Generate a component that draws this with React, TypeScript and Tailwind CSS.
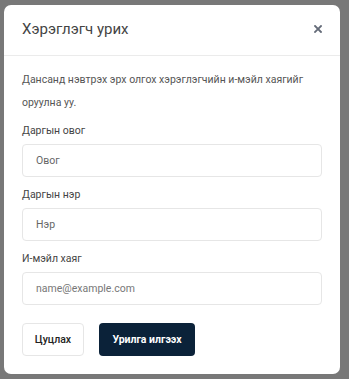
import React from "react";

export default function App() {
  return (
    <div className="w-[349px] h-[379px] bg-[#787878] pt-[5px] pl-[4px]" style={{ fontFamily: "Roboto, 'Noto Sans', sans-serif" }}>
      <div className="w-[336px] h-[369px] bg-white rounded-[7px] flex flex-col">
        <div className="h-[51px] border-b border-[#ebebeb] flex items-center justify-between pl-[18px] pr-[17px]">
          <span className="text-[15px] text-[#444] mt-[-1px]">Хэрэглэгч урих</span>
          <svg width="8" height="8" viewBox="0 0 8 8" className="mr-[1px] mt-[-3px]">
            <path d="M1 1 L7 7 M7 1 L1 7" stroke="#646b78" strokeWidth="1.8" strokeLinecap="square" />
          </svg>
        </div>
        <div className="px-[18px] pt-[12px]">
          <p className="text-[10.5px] leading-[23px] text-[#555]">Дансанд нэвтрэх эрх олгох хэрэглэгчийн и-мэйл хаягийг оруулна уу.</p>
          <div className="mt-[8px] text-[10.5px] text-[#444] leading-[18px]">Даргын овог</div>
          <div className="mt-[4px] h-[33px] border border-[#e6e6e6] rounded-[4px] flex items-center pl-[13px] text-[10.5px] text-[#666]">Овог</div>
          <div className="mt-[9px] text-[10.5px] text-[#444] leading-[18px]">Даргын нэр</div>
          <div className="mt-[4px] h-[33px] border border-[#e6e6e6] rounded-[4px] flex items-center pl-[13px] text-[10.5px] text-[#666]">Нэр</div>
          <div className="mt-[9px] text-[10.5px] text-[#444] leading-[18px]">И-мэйл хаяг</div>
          <div className="mt-[4px] h-[33px] border border-[#e6e6e6] rounded-[4px] flex items-center pl-[13px] text-[10.5px] text-[#777]">name@example.com</div>
          <div className="mt-[18px] flex gap-[15px]">
            <div className="h-[33px] w-[62px] border border-[#e6e6e6] rounded-[4px] flex items-center justify-center text-[10.5px] font-medium text-[#222]">Цуцлах</div>
            <div className="h-[33px] w-[96px] bg-[#0b2239] rounded-[4px] flex items-center justify-center text-[10.5px] font-bold text-white">Урилга илгээх</div>
          </div>
        </div>
      </div>
    </div>
  );
}
